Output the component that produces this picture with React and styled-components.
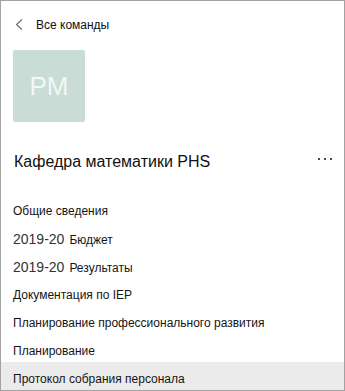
import React from "react";
import styled, { createGlobalStyle } from "styled-components";

const Global = createGlobalStyle`
  html, body { margin: 0; padding: 0; background: #ffffff; }
  body { font-family: "Liberation Sans", Arial, sans-serif; }
  * { box-sizing: border-box; }
`;

const Panel = styled.div`
  width: 345px;
  height: 391px;
  border: 1px solid #a2a2a2;
  background: #ffffff;
  overflow: hidden;
  display: flex;
  flex-direction: column;
  color: #1b1b1b;
`;

const Header = styled.div`
  display: flex;
  align-items: center;
  padding: 16px 0 0 14px;
  height: 32px;
  gap: 13px;
  font-size: 12px;
  line-height: 16px;
  color: #111;
`;

const Back = styled.svg`
  width: 8px;
  height: 11px;
  flex: none;
  margin-top: -1px;
`;

const Avatar = styled.div`
  margin: 17px 0 0 12px;
  width: 72px;
  height: 72px;
  border-radius: 2px;
  background: #c9ddd6;
  color: #f3f7f5;
  font-size: 26px;
  display: flex;
  align-items: center;
  justify-content: center;
  flex: none;
`;

const TitleRow = styled.div`
  margin-top: 30px;
  padding: 0 12px 0 13px;
  display: flex;
  align-items: center;
  justify-content: space-between;
  height: 20px;
`;

const Title = styled.div`
  font-size: 16px;
  line-height: 20px;
  color: #111;
`;

const Dots = styled.div`
  display: flex;
  gap: 4px;
  margin-top: -6px;
  span {
    width: 2px;
    height: 2px;
    background: #4a4a4a;
  }
`;

const List = styled.div`
  margin-top: 22px;
  display: flex;
  flex-direction: column;
`;

const Row = styled.div`
  height: 28px;
  flex: none;
  padding: 10px 0 0 12px;
  font-size: 12px;
  line-height: 14px;
  white-space: nowrap;
  color: #151515;
  background: ${(p) => (p.$active ? "#ebebeb" : "transparent")};
`;

const Year = styled.span`
  font-size: 14px;
  color: #333;
  margin-right: 5px;
`;

const items = [
  { text: "Общие сведения" },
  { year: "2019-20", text: "Бюджет" },
  { year: "2019-20", text: "Результаты" },
  { text: "Документация по IEP" },
  { text: "Планирование профессионального развития" },
  { text: "Планирование" },
  { text: "Протокол собрания персонала", active: true },
];

export default function App() {
  return (
    <>
      <Global />
      <Panel>
        <Header>
          <Back viewBox="0 0 8 11">
            <path d="M7 0.5 L1.5 5.5 L7 10.5" fill="none" stroke="#6b6b6b" strokeWidth="1.1" />
          </Back>
          <span>Все команды</span>
        </Header>
        <Avatar>PM</Avatar>
        <TitleRow>
          <Title>Кафедра математики PHS</Title>
          <Dots>
            <span />
            <span />
            <span />
          </Dots>
        </TitleRow>
        <List>
          {items.map((it, i) => (
            <Row key={i} $active={it.active}>
              {it.year && <Year>{it.year}</Year>}
              {it.text}
            </Row>
          ))}
        </List>
      </Panel>
    </>
  );
}
